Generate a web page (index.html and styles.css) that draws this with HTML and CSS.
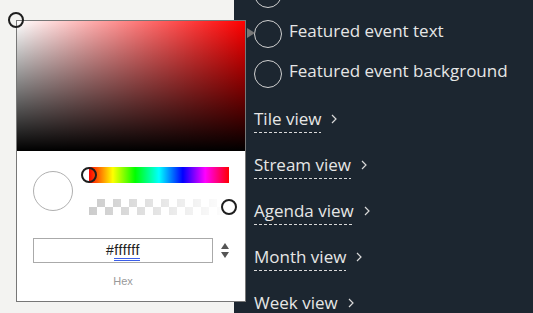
FILE: index.html
```html
<!DOCTYPE html>
<html>
<head>
<meta charset="utf-8">
<link rel="stylesheet" href="styles.css">
</head>
<body>
<div class="left"></div>
<div class="panel">
  <div class="swatches">
    <div class="swatch-row"><span class="swatch"></span></div>
    <div class="swatch-row"><span class="swatch"></span><span class="swatch-label">Featured event text</span></div>
    <div class="swatch-row"><span class="swatch"></span><span class="swatch-label">Featured event background</span></div>
  </div>
  <div class="views">
    <div class="view"><span class="view-name">Tile view</span><svg class="chev" width="6" height="10" viewBox="0 0 6 10"><polyline points="1,1 5,5 1,9" fill="none" stroke="#d8d8d8" stroke-width="1.2"/></svg></div>
    <div class="view"><span class="view-name">Stream view</span><svg class="chev" width="6" height="10" viewBox="0 0 6 10"><polyline points="1,1 5,5 1,9" fill="none" stroke="#d8d8d8" stroke-width="1.2"/></svg></div>
    <div class="view"><span class="view-name">Agenda view</span><svg class="chev" width="6" height="10" viewBox="0 0 6 10"><polyline points="1,1 5,5 1,9" fill="none" stroke="#d8d8d8" stroke-width="1.2"/></svg></div>
    <div class="view"><span class="view-name">Month view</span><svg class="chev" width="6" height="10" viewBox="0 0 6 10"><polyline points="1,1 5,5 1,9" fill="none" stroke="#d8d8d8" stroke-width="1.2"/></svg></div>
    <div class="view"><span class="view-name">Week view</span><svg class="chev" width="6" height="10" viewBox="0 0 6 10"><polyline points="1,1 5,5 1,9" fill="none" stroke="#d8d8d8" stroke-width="1.2"/></svg></div>
  </div>
</div>

<div class="picker">
  <div class="saturation">
    <span class="handle sat-handle"></span>
  </div>
  <div class="controls">
    <div class="top-row">
      <span class="preview"></span>
      <div class="sliders">
        <div class="hue"><span class="handle hue-handle"></span></div>
        <div class="alpha"><span class="handle alpha-handle"></span></div>
      </div>
    </div>
    <div class="hex-row">
      <div class="hex-input">#<span class="spell">ffffff</span></div>
      <div class="spinner"><span class="up"></span><span class="down"></span></div>
    </div>
    <div class="hex-label">Hex</div>
  </div>
  <span class="arrow"></span>
</div>
</body>
</html>
```

FILE: styles.css
```css
* { box-sizing: border-box; }
html, body { margin: 0; padding: 0; }
body {
  width: 533px;
  height: 313px;
  overflow: hidden;
  display: flex;
  position: relative;
  font-family: "Open Sans", "Liberation Sans", sans-serif;
}
.left {
  width: 234px;
  flex: none;
  background: #f3f3f1;
}
.panel {
  flex: 1;
  background: #1c2630;
  padding-left: 20px;
  overflow: hidden;
  color: #e6e6e6;
}
.swatches {
  margin-top: -26px;
  display: flex;
  flex-direction: column;
}
.swatch-row {
  height: 40px;
  display: flex;
  align-items: center;
  gap: 7px;
}
.swatch {
  width: 28px;
  height: 28px;
  border-radius: 50%;
  border: 1px solid #d0d0d0;
  flex: none;
}
.swatch-label {
  font-size: 17px;
  line-height: 22px;
  margin-bottom: 6px;
}
.views {
  margin-top: 14px;
  display: flex;
  flex-direction: column;
  gap: 21px;
}
.view {
  display: flex;
  align-items: flex-start;
  height: 25px;
}
.view-name {
  font-size: 17px;
  line-height: 22px;
  padding-bottom: 3px;
  background-image: repeating-linear-gradient(to right, #d8d8d8 0 3px, transparent 3px 5px);
  background-size: 100% 1px;
  background-repeat: no-repeat;
  background-position: left bottom;
}
.chev {
  margin-left: 10px;
  margin-top: 6px;
}

.picker {
  position: absolute;
  left: 16px;
  top: 20px;
  width: 230px;
  height: 282px;
  border: 1px solid #777;
  background: #fff;
}
.saturation {
  position: relative;
  height: 130px;
  background:
    linear-gradient(to top, #000, rgba(0,0,0,0)),
    linear-gradient(to right, #fff, rgba(255,255,255,0)),
    #f00;
}
.handle {
  position: absolute;
  width: 16px;
  height: 16px;
  border-radius: 50%;
  border: 2px solid #1e1e1e;
}
.sat-handle { left: -9px; top: -9px; }
.controls {
  padding: 16px 16px 0 16px;
}
.top-row {
  display: flex;
  gap: 16px;
}
.preview {
  width: 40px;
  height: 40px;
  margin-top: 4px;
  border-radius: 50%;
  border: 1px solid #b0b0b0;
  flex: none;
}
.sliders {
  width: 140px;
  display: flex;
  flex-direction: column;
  gap: 16px;
}
.hue {
  position: relative;
  height: 16px;
  background: linear-gradient(to right, #f00 0%, #ff0 17%, #0f0 33%, #0ff 50%, #00f 67%, #f0f 83%, #f00 100%);
}
.hue-handle { left: -8px; top: 0; }
.alpha {
  position: relative;
  height: 16px;
  background:
    linear-gradient(to right, rgba(255,255,255,0), #fff),
    repeating-conic-gradient(#cccccc 0 25%, #ffffff 0 50%) 0 0 / 16px 16px;
}
.alpha-handle { left: 132px; top: 0; }
.hex-row {
  margin-top: 23px;
  display: flex;
  align-items: center;
  gap: 8px;
}
.hex-input {
  width: 180px;
  height: 25px;
  border: 1px solid #aaa;
  font-family: "Liberation Sans", Arial, sans-serif;
  font-size: 14px;
  letter-spacing: 0.6px;
  color: #222;
  text-align: center;
  line-height: 23px;
}
.spell {
  border-bottom: 3px double #3b5ee8;
  padding-bottom: 0;
}
.spinner {
  display: flex;
  flex-direction: column;
  gap: 3px;
  width: 8px;
}
.up, .down {
  width: 0; height: 0;
  border-left: 4px solid transparent;
  border-right: 4px solid transparent;
}
.up { border-bottom: 6px solid #555; }
.down { border-top: 6px solid #555; }
.hex-label {
  width: 180px;
  text-align: center;
  margin-top: 12px;
  font-family: "Liberation Sans", Arial, sans-serif;
  font-size: 11px;
  color: #999;
}
.arrow {
  position: absolute;
  right: -10px;
  top: 7px;
  width: 0; height: 0;
  border-top: 5px solid transparent;
  border-bottom: 5px solid transparent;
  border-left: 8px solid #777;
}
```
